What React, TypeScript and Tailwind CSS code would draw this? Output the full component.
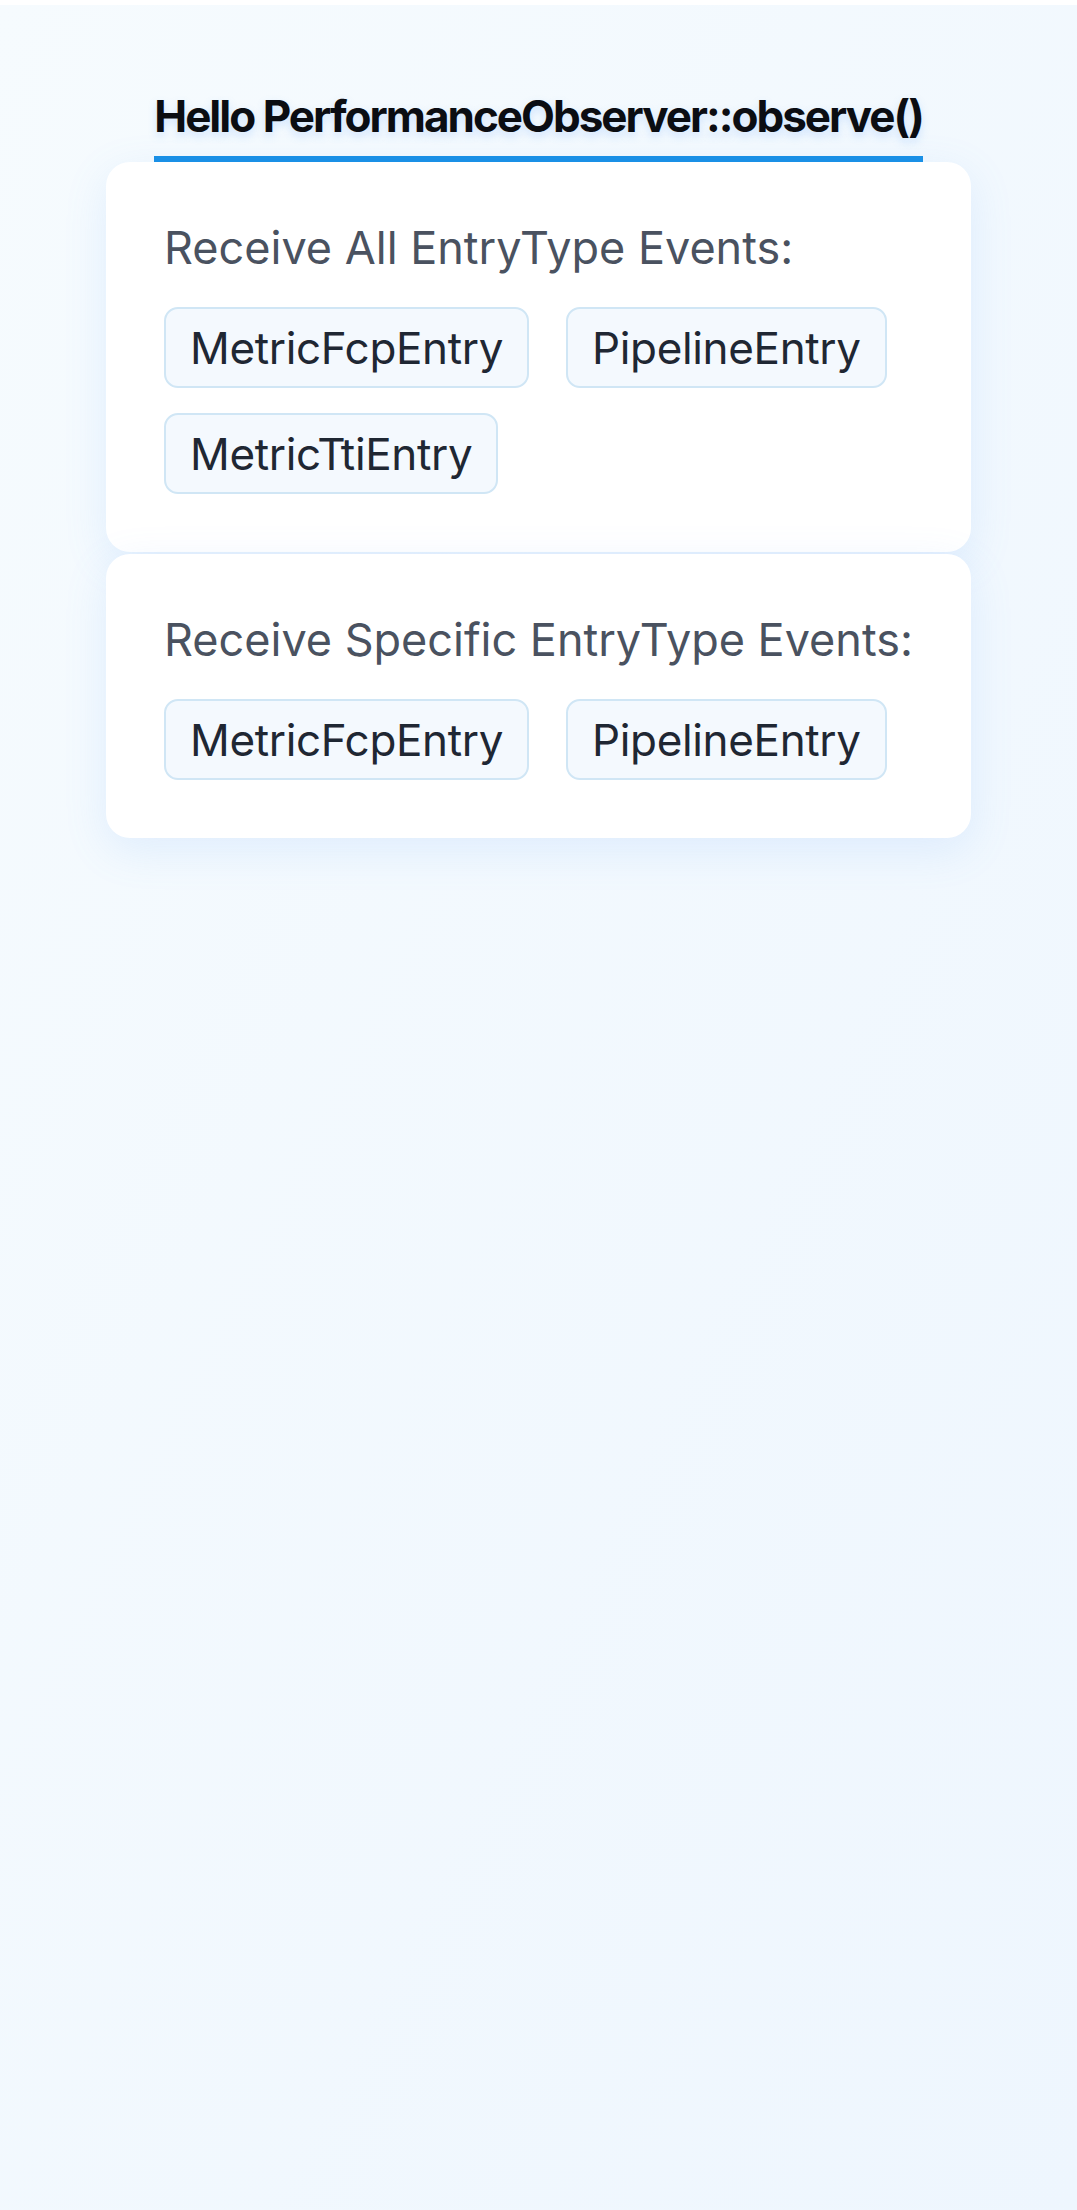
import React from 'react';

const Chip: React.FC<{ label: string }> = ({ label }) => (
  <span className="flex h-[81px] items-center rounded-[14px] border-2 border-[#d0e6f5] bg-[#f4f9fe] px-6 text-[44px] leading-none tracking-[-0.008em] text-[#1f2733]">
    {label}
  </span>
);

const Section: React.FC<{ title: string; entries: string[] }> = ({ title, entries }) => (
  <div className="rounded-3xl bg-white px-[58px] pt-[59px] pb-[58px] shadow-[0_12px_44px_rgba(96,165,250,0.14)]">
    <p className="text-[45px] leading-[53px] text-[#4a5260]">{title}</p>
    <div className="mt-[33px] flex flex-wrap gap-x-[37px] gap-y-[25px]">
      {entries.map((e, i) => (
        <Chip key={i} label={e} />
      ))}
    </div>
  </div>
);

export default function App() {
  return (
    <div className="bg-white pt-[5px] font-['Inter',sans-serif]">
      <div className="min-h-[2205px] bg-gradient-to-br from-[#f6fbfe] to-[#eef6fe] px-[106px] pt-[85px]">
        <div className="flex justify-center">
          <h1 className="border-b-[6px] border-[#1890e6] pb-[13px] text-[44px] leading-[53px] font-bold tracking-[-0.045em] text-[#0b0d12] [text-shadow:0_4px_8px_rgba(96,165,250,0.25)]">
            Hello PerformanceObserver::observe()
          </h1>
        </div>
        <div className="flex flex-col gap-[2px]">
          <Section
            title="Receive All EntryType Events:"
            entries={['MetricFcpEntry', 'PipelineEntry', 'MetricTtiEntry']}
          />
          <Section
            title="Receive Specific EntryType Events:"
            entries={['MetricFcpEntry', 'PipelineEntry']}
          />
        </div>
      </div>
    </div>
  );
}
